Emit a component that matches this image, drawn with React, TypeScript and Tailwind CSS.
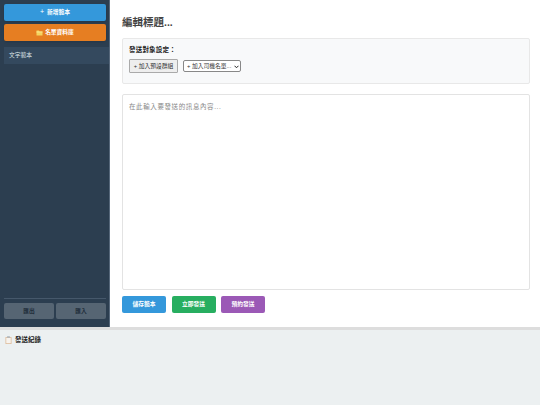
import { useState } from 'react';

const font = 'font-["Liberation_Sans","Noto_Sans_CJK_TC",sans-serif]';

function FolderIcon() {
  return (
    <svg width="7" height="7" viewBox="0 0 14 14" className="shrink-0">
      <path d="M1 3h5l1 2h6v8H1z" fill="#f4d35e" />
      <path d="M1 5h12v2H1z" fill="#fbe58f" />
    </svg>
  );
}

function ClipboardIcon() {
  return (
    <svg width="7" height="8" viewBox="0 0 14 16" className="shrink-0">
      <rect x="1" y="2" width="12" height="14" rx="1" fill="#dcb896" />
      <rect x="2.5" y="3.5" width="9" height="11" fill="#f7f3ee" />
      <rect x="4" y="0.5" width="6" height="3" rx="1" fill="#aab3ba" />
    </svg>
  );
}

export default function App() {
  const [text, setText] = useState('');

  return (
    <div className={`${font} w-[540px] h-[405px] flex flex-col overflow-hidden bg-[#ecf0f1]`}>
      <div className="h-[330px] shrink-0 flex border-b-[3px] border-[#dddddd]">
        {/* sidebar */}
        <aside className="w-[110px] shrink-0 bg-[#2c3e50] border-r border-[#56677a] flex flex-col pt-1 pb-[8px]">
          <div className="pl-1 pr-[3px] flex flex-col gap-[3px]">
            <button className="h-[17px] rounded-[2px] bg-[#3498db] text-white text-[5.75px] font-bold flex items-center justify-center gap-[3px] shadow-sm">
              <span className="text-[7px] font-normal">+</span> 新增範本
            </button>
            <button className="h-[17px] rounded-[2px] bg-[#e67e22] text-white text-[5.75px] font-bold flex items-center justify-center gap-[2px] shadow-sm">
              <FolderIcon /> 名單資料庫
            </button>
          </div>
          <div className="mt-[6px] ml-1 h-[17px] bg-[#34495e] flex items-center pl-[5px] text-[5.75px] text-[#dfe6e9]">文字範本</div>
          <div className="flex-1" />
          <div className="ml-1 mr-[3px] border-t border-[#46586b] pt-[4px] flex gap-[2px]">
            <button className="flex-1 h-4 rounded-[2px] bg-[#566573] text-[#1f2d3a] text-[5.75px] font-bold">匯出</button>
            <button className="flex-1 h-4 rounded-[2px] bg-[#566573] text-[#1f2d3a] text-[5.75px] font-bold">匯入</button>
          </div>
        </aside>

        {/* editor */}
        <main className="flex-1 bg-white pt-[15px] pl-[12px] pr-[10px] pb-[14px] flex flex-col">
          <h1 className="text-[10.5px] leading-[15px] font-bold text-[#444444]">編輯標題...</h1>
          <section className="mt-[8px] h-[46px] border border-[#e8e8e8] rounded-[2px] bg-[#f8f9fa] px-[6px] pt-[6px]">
            <div className="text-[6.5px] leading-[9px] tracking-[0.2px] font-bold text-[#222222]">發送對象設定：</div>
            <div className="mt-[5px] flex items-center gap-[5px]">
              <button className="h-[14px] w-[49px] border border-[#aaaaaa] bg-[#eeeeee] rounded-[1px] text-[5.75px] text-[#333333] whitespace-nowrap">+ 加入預設群組</button>
              <div className="relative">
                <select className="block appearance-none h-[12.5px] w-[58px] border border-[#888888] rounded-[2px] bg-white pl-[3px] pr-[8px] text-[5.75px] text-[#333333]">
                  <option>+ 加入司機名單...</option>
                </select>
                <svg width="5" height="4" viewBox="0 0 10 8" className="absolute right-[2px] top-[5px] pointer-events-none">
                  <path d="M1 1.5l4 4 4-4" fill="none" stroke="#222222" strokeWidth="2" />
                </svg>
              </div>
            </div>
          </section>
          <textarea
            value={text}
            onChange={(e) => setText(e.target.value)}
            placeholder="在此輸入要發送的訊息內容..."
            className="mt-[10px] flex-1 min-h-0 resize-none border border-[#e3e3e3] rounded-[2px] px-[6px] py-[7px] text-[6.5px] tracking-[0.6px] outline-none placeholder:text-[#888888]"
          />
          <div className="mt-[6px] flex gap-[5.5px]">
            <button className="w-[44px] h-[17px] rounded-[2px] bg-[#3498db] text-white text-[5.75px] font-bold">儲存範本</button>
            <button className="w-[44px] h-[17px] rounded-[2px] bg-[#27ae60] text-white text-[5.75px] font-bold">立即發送</button>
            <button className="w-[44px] h-[17px] rounded-[2px] bg-[#9b59b6] text-white text-[5.75px] font-bold">預約發送</button>
          </div>
        </main>
      </div>

      {/* send log */}
      <div className="flex-1 px-[5px] pt-[5px]">
        <div className="flex items-center gap-[3px] text-[6.5px] leading-[9px] font-bold text-[#222222]">
          <ClipboardIcon /> 發送紀錄
        </div>
      </div>
    </div>
  );
}
